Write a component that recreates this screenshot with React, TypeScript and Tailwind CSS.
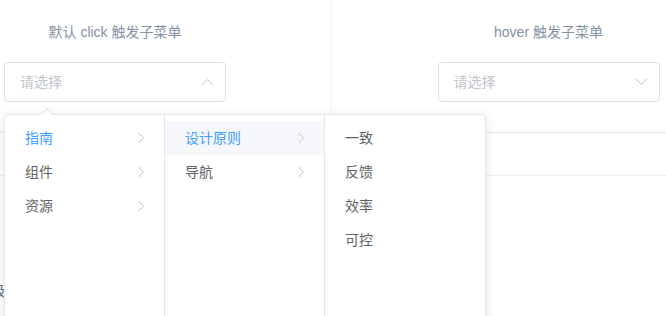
import React from "react";

const font = "font-['Liberation_Sans','Noto_Sans_CJK_SC',sans-serif]";

const Chevron = ({ dir }: { dir: "up" | "down" | "right" }) => {
  if (dir === "right") {
    return (
      <svg width="8" height="12" viewBox="0 0 8 12" fill="none">
        <path d="M1.5 1 L6.5 6 L1.5 11" stroke="#c0c4cc" strokeWidth="1" />
      </svg>
    );
  }
  return (
    <svg width="13" height="8" viewBox="0 0 13 8" fill="none">
      <path
        d={dir === "up" ? "M1 7 L6.5 1.5 L12 7" : "M1 1 L6.5 6.5 L12 1"}
        stroke="#c0c4cc"
        strokeWidth="1"
      />
    </svg>
  );
};

const Select = ({ open }: { open: boolean }) => (
  <div className="inline-flex w-[222px] h-[40px] items-center justify-between border border-[#dcdfe6] rounded-[4px] pl-[15px] pr-[11px] text-left">
    <span className="text-[14px] text-[#c0c4cc]">请选择</span>
    <Chevron dir={open ? "up" : "down"} />
  </div>
);

type Item = { label: string; active?: boolean; hover?: boolean; more?: boolean };

const columns: Item[][] = [
  [
    { label: "指南", active: true, more: true },
    { label: "组件", more: true },
    { label: "资源", more: true },
  ],
  [
    { label: "设计原则", active: true, hover: true, more: true },
    { label: "导航", more: true },
  ],
  [{ label: "一致" }, { label: "反馈" }, { label: "效率" }, { label: "可控" }],
];

const App = () => {
  return (
    <div className={`relative w-[666px] h-[316px] overflow-hidden bg-white ${font}`}>
      {/* demo blocks */}
      <div className="flex w-[866px] -ml-[101px] border-b border-[#e4eaf6]">
        <div className="w-[433px] pt-[22px] pb-[30px] text-center border-r border-[#eff2f6]">
          <span className="block text-[14px] leading-[20px] text-[#8492a6] mb-[20px]">默认 click 触发子菜单</span>
          <Select open />
        </div>
        <div className="w-[433px] pt-[22px] pb-[30px] text-center">
          <span className="block text-[14px] leading-[20px] text-[#8492a6] mb-[20px]">hover 触发子菜单</span>
          <Select open={false} />
        </div>
      </div>
      <div className="h-[43px] border-b border-[#eaeefb]" />
      <p className="mt-[105px] -ml-[9px] text-[14px] leading-[20px] text-[#5e6d82]">级</p>

      {/* cascader dropdown */}
      <div className="absolute left-[4px] top-[114px] w-[482px] border border-[#e4e7ed] rounded-[4px] bg-white shadow-[0_2px_12px_0_rgba(0,0,0,0.1)]">
        <div className="absolute left-[38px] -top-[5px] w-[8px] h-[8px] rotate-45 bg-white border-t border-l border-[#e4e7ed]" />
        <div className="flex h-[216px]">
          {columns.map((col, ci) => (
            <div
              key={ci}
              className={`w-[160px] py-[6px] ${ci < 2 ? "border-r border-[#e4e7ed]" : ""}`}
            >
              {col.map((it) => (
                <div
                  key={it.label}
                  className={`flex h-[34px] items-center justify-between pl-[20px] pr-[19px] text-[14px] ${
                    it.active ? "text-[#409eff]" : "text-[#606266]"
                  } ${it.hover ? "bg-[#f5f7fa]" : ""}`}
                >
                  <span>{it.label}</span>
                  {it.more && <Chevron dir="right" />}
                </div>
              ))}
            </div>
          ))}
        </div>
      </div>
    </div>
  );
};

export default App;
